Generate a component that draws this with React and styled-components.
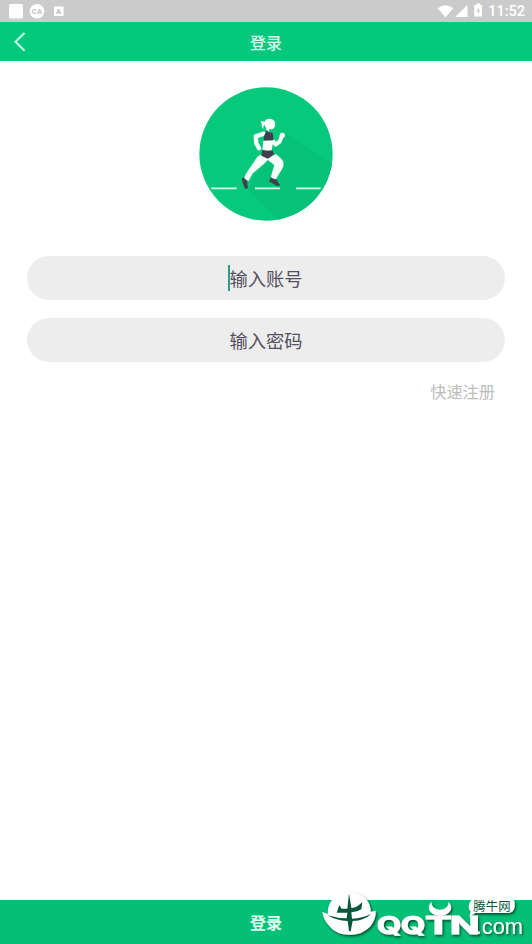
import React from 'react';
import styled, { createGlobalStyle } from 'styled-components';

const GlobalStyle = createGlobalStyle`
  * {
    box-sizing: border-box;
  }
  body {
    margin: 0;
    background: #fff;
    font-family: Roboto, 'Noto Sans CJK SC', sans-serif;
  }
`;

const Screen = styled.div`
  position: relative;
  display: flex;
  flex-direction: column;
  height: 100vh;
  overflow: hidden;
`;

const StatusBar = styled.div`
  display: flex;
  align-items: center;
  justify-content: space-between;
  height: 22px;
  flex: none;
  padding: 0 7px 0 9px;
  background: #cbcbcb;
`;

const StatusGroup = styled.div`
  display: flex;
  align-items: center;
  height: 22px;
`;

const Clock = styled.span`
  padding-top: 2px;
  font-size: 14.5px;
  line-height: 22px;
  font-weight: 500;
  color: #fff;
`;

const Header = styled.header`
  display: grid;
  grid-template-columns: 60px 1fr 60px;
  align-items: center;
  height: 39px;
  flex: none;
  background: #04c97d;
`;

const BackButton = styled.button`
  display: flex;
  padding: 0 0 0 13px;
  border: 0;
  background: none;
`;

const Title = styled.h1`
  margin: 0;
  padding-top: 5px;
  font-size: 16px;
  line-height: 24px;
  font-weight: 500;
  text-align: center;
  color: #d5ffed;
`;

const Content = styled.main`
  display: flex;
  flex: 1;
  flex-direction: column;
  align-items: center;
  padding: 26px 27px 0;
`;

const Form = styled.form`
  display: flex;
  flex-direction: column;
  gap: 18px;
  width: 100%;
  margin-top: 35px;
`;

const Field = styled.label`
  display: flex;
  align-items: center;
  justify-content: center;
  height: 44px;
  border-radius: 22px;
  background: #ededed;
  font-size: 18.3px;
  line-height: 28px;
  color: #55505f;
`;

const FieldText = styled.span`
  padding-top: 3px;
`;

const Caret = styled.span`
  width: 2px;
  height: 26px;
  margin: 0 -1px;
  background: #2a9d8f;
`;

const RegisterLink = styled.a`
  align-self: flex-end;
  margin: 19px 10px 0 0;
  font-size: 16.2px;
  line-height: 24px;
  color: #bdbdbd;
`;

const SubmitButton = styled.button`
  flex: none;
  height: 44px;
  padding: 0 0 1px;
  border: 0;
  background: #04bf76;
  font-family: inherit;
  font-size: 16px;
  font-weight: 700;
  color: #e0fff2;
`;

const Watermark = styled.svg`
  position: absolute;
  right: 0;
  bottom: 0;
  pointer-events: none;
`;

const NotificationIcons = () => (
  <svg width="58" height="22" viewBox="9 0 58 22">
    <rect x="9" y="4" width="14" height="14.500" rx="1.500" fill="#fff" />
    <circle cx="37" cy="11.300" r="7.300" fill="#fff" />
    <text x="31.500" y="14" fontSize="8" fontWeight="700" fill="#c4c4c4">CA</text>
    <rect x="54" y="6.500" width="9.600" height="9.600" rx="1" fill="#fff" />
    <text x="56" y="14" fontSize="7.500" fontWeight="700" fill="#bbb">A</text>
  </svg>
);

const SystemIcons = () => (
  <svg width="51" height="22" viewBox="437 0 51 22" fill="#fff">
    <path d="M437.700 8.200Q445.500 2.200 453.300 8.200L445.500 17.500Z" />
    <path d="M467.500 5V17H455Z" />
    <path d="M476.600 3.500H480V5H482V16.500H474.200V5H476.600Z" />
    <path d="M479 7 476.300 11.400H478L477.500 14.500 480.200 10.100H478.500Z" fill="#cbcbcb" />
  </svg>
);

const BackIcon = () => (
  <svg width="14" height="20" viewBox="0 0 14 20">
    <path d="M11.500 1 2.500 9.800 11.500 18.800" fill="none" stroke="#c4ffe7" strokeWidth="2" />
  </svg>
);

const RunnerLogo = () => (
  <svg width="134" height="134" viewBox="27 21 402 402">
    <defs>
      <clipPath id="badge">
        <circle cx="228" cy="222" r="200" />
      </clipPath>
    </defs>
    <circle cx="228" cy="222" r="200" fill="#06c97c" />
    <g clipPath="url(#badge)">
      <path d="M283 158 440 262V440H285L172 326 215 250Z" fill="#06c278" />
      <path d="M64 325H140M195 325H270M318 325H392" stroke="#d9ffee" strokeWidth="5" />
    </g>
    <g fill="none" stroke="#f7fffb" strokeLinecap="round" strokeLinejoin="round">
      <path d="M222 161 197 169 199 190 207 205" strokeWidth="13" />
      <path d="M249 183 257 194 269 185 276 166" strokeWidth="12" />
    </g>
    <g fill="#f7fffb">
      <path d="M224 125C227 116 239 114 249 119C256 123 257 132 255 139C253 147 246 149 238 147L237 155 228 153 229 145Q224 139 224 134Q219 137 220 147Q213 140 215 131Q211 128 214 123Z" />
      <path d="M220 180 250 181 245 212H217Z" />
      <path d="M214 224 236 236C222 255 197 270 187 282L175 304 162 297C167 278 178 267 186 254C196 241 200 227 214 224Z" />
      <path d="M233 234 258 222C275 236 284 245 280 258C276 272 265 281 258 299L242 296C245 278 250 266 253 256Q245 248 233 240Z" />
      <ellipse cx="277" cy="166" rx="8" ry="8" />
    </g>
    <g fill="#40404f">
      <path d="M230 150 237 157 248 158 251 181 220 182 223 166Z" />
      <path d="M217 209Q232 214 247 211L252 222Q244 231 233 236L214 227Z" />
      <path d="M157 293Q162 291 165 297L172 302Q171 312 174 323Q166 330 164 323L156 304Z" />
      <path d="M243 292Q251 299 258 297L270 315Q267 320 260 317L237 304Z" />
    </g>
  </svg>
);

const SiteMark = () => (
  <Watermark width="222" height="60" viewBox="0 0 666 180">
    <defs>
      <filter id="markShadow" x="-5%" y="-5%" width="112%" height="120%">
        <feDropShadow dx="4" dy="5" stdDeviation="3" floodColor="#00351f" floodOpacity="0.8" />
      </filter>
    </defs>
    <g filter="url(#markShadow)" fill="#fff">
      <path d="M54 90C51 55 76 27 118 23C158 25 184 53 182 84L197 80Q199 105 180 128Q154 154 118 152Q78 151 60 128Q40 108 37 84Z" />
      <path d="M365 54C364 68 374 76 390 77C406 76 416 68 415 54C434 70 420 95 390 95C360 95 346 70 365 54Z" />
      <path d="M494 44H602Q614 44 614 56V68Q612 85 594 87H496L478 99 482 82Q474 77 477 62Q480 46 494 44Z" />
      <g fontFamily="Inter, sans-serif" fontWeight="700" fontSize="72" stroke="#fff" strokeWidth="3">
        <text x="200" y="150" textLength="74" lengthAdjust="spacingAndGlyphs">Q</text>
        <text x="272" y="150" textLength="74" lengthAdjust="spacingAndGlyphs">Q</text>
        <text x="345" y="150" textLength="80" lengthAdjust="spacingAndGlyphs">T</text>
        <text x="419" y="150" textLength="90" lengthAdjust="spacingAndGlyphs">N</text>
      </g>
      <text x="497" y="151" fontFamily="'Liberation Sans', sans-serif" fontSize="65" textLength="142" lengthAdjust="spacingAndGlyphs">.com</text>
    </g>
    <g fill="#07583a">
      <path d="M117 28 124 72Q144 70 157 53L154 76Q143 83 124 85L126 104Q158 102 184 89Q164 109 128 111L122 142H117L113 111Q78 110 53 94Q82 103 110 103L112 86H80L88 63 95 74H112Z" />
      <text x="490" y="80" fontFamily="'Noto Sans CJK SC', sans-serif" fontSize="37" textLength="112">腾牛网</text>
    </g>
  </Watermark>
);

const App = () => (
  <>
    <GlobalStyle />
    <Screen>
      <StatusBar>
        <StatusGroup>
          <NotificationIcons />
        </StatusGroup>
        <StatusGroup>
          <SystemIcons />
          <Clock>11:52</Clock>
        </StatusGroup>
      </StatusBar>
      <Header>
        <BackButton type="button" aria-label="返回">
          <BackIcon />
        </BackButton>
        <Title>登录</Title>
      </Header>
      <Content>
        <RunnerLogo />
        <Form>
          <Field>
            <Caret />
            <FieldText>输入账号</FieldText>
          </Field>
          <Field>
            <FieldText>输入密码</FieldText>
          </Field>
        </Form>
        <RegisterLink>快速注册</RegisterLink>
      </Content>
      <SubmitButton type="button">登录</SubmitButton>
      <SiteMark />
    </Screen>
  </>
);

export default App;
